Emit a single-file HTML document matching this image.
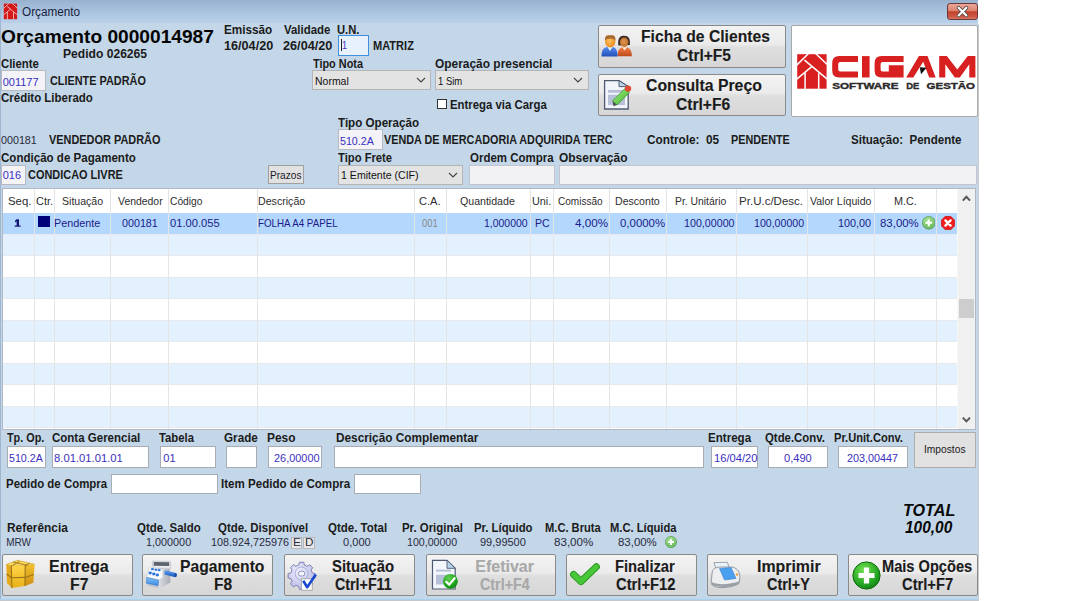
<!DOCTYPE html>
<html><head><meta charset="utf-8"><style>
html,body{margin:0;padding:0;width:1080px;height:601px;overflow:hidden;background:#fff}
body{position:relative;font-family:"Liberation Sans",sans-serif}
.t{position:absolute;line-height:0;white-space:nowrap;transform-origin:0 0}
</style></head><body>
<div style="position:absolute;left:0px;top:0px;width:978px;height:601px;background:#c3d7e8"></div>
<div style="position:absolute;left:0px;top:0px;width:978px;height:23px;background:linear-gradient(#97b1cf,#a6c0dc 40%,#b2cbe4 75%,#b9cfe9)"></div>
<div style="position:absolute;left:0px;top:0px;width:1px;height:601px;background:#9fb6d0"></div>
<div style="position:absolute;left:947px;top:3px;width:29px;height:15px;border:1px solid #6a3a3a;border-radius:3px;background:linear-gradient(#eaa898,#dc8270 45%,#c4422c 52%,#cc5a44 85%,#d87a66)">
<svg width="29" height="15" style="position:absolute;left:0;top:0"><path d="M10.6 3.8 L18.4 11.4 M18.4 3.8 L10.6 11.4" stroke="#5a4a4a" stroke-width="3.8" stroke-linecap="round"/><path d="M10.6 3.8 L18.4 11.4 M18.4 3.8 L10.6 11.4" stroke="#fff" stroke-width="2.1" stroke-linecap="round"/></svg></div>
<svg style="position:absolute;left:0;top:0" width="30" height="24">
<g transform="translate(3.8,3.6) scale(0.452,0.452)">
<rect x="0" y="0" width="29.4" height="34.5" fill="#d41818"/>
<g stroke="#f4c8c8" stroke-width="1.9" fill="none">
<path d="M11.1 -0.5 L-0.5 10.9"/>
<path d="M18.7 -0.5 L30 10.3"/>
<path d="M7.3 6 L30 25"/>
<path d="M-0.5 25 L14.6 12.4"/>
<path d="M7.9 18.8 V35"/>
<path d="M21.5 19 V35"/>
</g></g></svg>
<div style="position:absolute;left:1px;top:70px;width:43px;height:19px;background:#f4f4f8;border:1px solid #b9b9c0"></div>
<div style="position:absolute;left:1px;top:165px;width:23px;height:18px;background:#f4f4f8;border:1px solid #b9b9c0"></div>
<div style="position:absolute;left:268px;top:165px;width:34px;height:17px;background:#e1e1e1;border:1px solid #a0a0a0"></div>
<div style="position:absolute;left:338px;top:35px;width:29px;height:19px;background:#e6f1fc;border:1px solid #3f8fe0"></div>
<div style="position:absolute;left:341px;top:39px;width:1px;height:12px;background:#222"></div>
<div style="position:absolute;left:312px;top:70px;width:117px;height:18px;background:#e3e3e3;border:1px solid #b4b4b4"></div>
<div style="position:absolute;left:435px;top:70px;width:152px;height:18px;background:#e3e3e3;border:1px solid #b4b4b4"></div>
<svg style="position:absolute;left:416px;top:77px" width="10" height="6"><path d="M1 1 L5 5 L9 1" stroke="#444" stroke-width="1.1" fill="none"/></svg>
<svg style="position:absolute;left:573px;top:77px" width="10" height="6"><path d="M1 1 L5 5 L9 1" stroke="#444" stroke-width="1.1" fill="none"/></svg>
<div style="position:absolute;left:437px;top:99px;width:8px;height:8px;background:#fff;border:1px solid #333"></div>
<div style="position:absolute;left:338px;top:129px;width:43px;height:19px;background:#f4f4f8;border:1px solid #b9b9c0"></div>
<div style="position:absolute;left:338px;top:165px;width:123px;height:18px;background:#e3e3e3;border:1px solid #b4b4b4"></div>
<svg style="position:absolute;left:448px;top:172px" width="10" height="6"><path d="M1 1 L5 5 L9 1" stroke="#444" stroke-width="1.1" fill="none"/></svg>
<div style="position:absolute;left:469px;top:165px;width:84px;height:18px;background:#f2f2f4;border:1px solid #c4c4cc"></div>
<div style="position:absolute;left:559px;top:165px;width:416px;height:18px;background:#f2f2f4;border:1px solid #c4c4cc"></div>
<div style="position:absolute;left:598px;top:25px;width:188px;height:43px;box-sizing:border-box;border:1px solid #8a8a8a;border-radius:2px;background:linear-gradient(#f3f3f3,#ebebeb 44%,#dfdfdf 52%,#d6d6d6)"></div>
<div style="position:absolute;left:598px;top:74px;width:188px;height:42px;box-sizing:border-box;border:1px solid #8a8a8a;border-radius:2px;background:linear-gradient(#f3f3f3,#ebebeb 44%,#dfdfdf 52%,#d6d6d6)"></div>
<svg style="position:absolute;left:0;top:0" width="1080" height="601">
<defs>
<linearGradient id="ubl" x1="0" y1="0" x2="0" y2="1"><stop offset="0" stop-color="#5a8ef0"/><stop offset="1" stop-color="#2050b8"/></linearGradient>
<linearGradient id="uor" x1="0" y1="0" x2="0" y2="1"><stop offset="0" stop-color="#f08048"/><stop offset="1" stop-color="#c04818"/></linearGradient>
<radialGradient id="uh1" cx=".45" cy=".45" r=".6"><stop offset="0" stop-color="#ffc060"/><stop offset="1" stop-color="#e88a20"/></radialGradient>
<radialGradient id="uh2" cx=".45" cy=".45" r=".6"><stop offset="0" stop-color="#e09850"/><stop offset="1" stop-color="#b86a28"/></radialGradient>
<linearGradient id="pgr" x1="0" y1="0" x2="1" y2="1"><stop offset="0" stop-color="#a0f080"/><stop offset="1" stop-color="#40b030"/></linearGradient>
</defs>
<path d="M617.6 56.3 C617.3 50 620 47 624.6 47 C629.2 47 632 50 631.8 56.3 Z" fill="url(#uor)"/>
<path d="M622 47.2 L624.6 50.6 L627.2 47.2 Z" fill="#ffe4d0"/>
<path d="M618.3 45.4 C617.5 38 620 35.8 624.2 35.8 C628.5 35.8 630.5 38.5 629.8 45 Z" fill="#3a2a22"/>
<ellipse cx="624.2" cy="42.2" rx="4.2" ry="4.8" fill="url(#uh2)"/>
<path d="M601.5 56.5 C601.2 50 604 46.5 609.8 46.5 C615.6 46.5 617.8 50 617.5 56.5 Z" fill="url(#ubl)"/>
<path d="M607.2 46.7 L610 51 L612.8 46.7 Z" fill="#e0f0ff"/>
<ellipse cx="610.2" cy="41.4" rx="5.2" ry="6" fill="url(#uh1)"/>
<path d="M605 40.5 C604.6 35 607.5 35.3 610.2 35.3 C613 35.3 615.8 35 615.5 40.5 C613.5 37.8 607 37.8 605 40.5 Z" fill="#a86a30"/>
<path d="M604.6 80.6 H619 L628.2 86.6 V109 H604.6 Z" fill="#f2f6fc" stroke="#505a70" stroke-width="1.3"/>
<path d="M619 80.6 V86.6 H628.2 Z" fill="#b8d4ec" stroke="#505a70" stroke-width="1"/>
<rect x="608" y="89.9" width="17" height="2.9" fill="#b8c0d8"/>
<rect x="608" y="94.7" width="17" height="10.4" fill="#b8c0d8"/>
<path d="M612.5 101 L625 88.5 L629.5 92.5 L617 105 Z" fill="url(#pgr)" stroke="#3a9a30" stroke-width=".8"/>
<path d="M612.5 101 L617 105 L613.5 106.3 Z" fill="#505050"/>
<circle cx="628" cy="88.6" r="3.2" fill="#e04a30"/>
</svg>
<div style="position:absolute;left:791px;top:25px;width:187px;height:92px;box-sizing:border-box;background:#fff;border:1px solid #a8a8a8;border-radius:2px"></div>
<svg style="position:absolute;left:0;top:0" width="1080" height="601">
<g transform="translate(797.2,54.2)">
<rect x="0" y="0" width="29.4" height="34.5" fill="#d92020"/>
<g stroke="#fff" stroke-width="1.5" fill="none" stroke-linecap="butt">
<path d="M11.1 -0.5 L-0.5 10.9"/>
<path d="M18.7 -0.5 L30 10.3"/>
<path d="M7.3 6 L30 25"/>
<path d="M-0.5 25 L14.6 12.4"/>
<path d="M7.9 18.8 V35"/>
<path d="M21.5 19 V35"/>
</g></g>
<g fill="#d92020" fill-rule="evenodd">
<path d="M839.2 56.1 H858 V62.1 H840.2 Q838.2 62.1 838.2 64.1 V69.5 Q838.2 71.5 840.2 71.5 H858 V77.5 H839.2 Q832.2 77.5 832.2 70.5 V63.1 Q832.2 56.1 839.2 56.1 Z"/>
<path d="M862 56.1 H869.6 V77.5 H862 Z"/>
<path d="M881.6 56.1 H903.6 V62.1 H882.6 Q880.6 62.1 880.6 64.1 V69.5 Q880.6 71.5 882.6 71.5 H888.8 V65.3 H903.6 V77.5 H881.6 Q874.6 77.5 874.6 70.5 V63.1 Q874.6 56.1 881.6 56.1 Z"/>
<path d="M906.2 77.5 L918.9 56.1 H927.5 L935.7 77.5 H929.2 L923.2 61.8 L913.3 77.5 Z"/>
<path d="M939.2 77.5 V56.1 H946.8 L957.3 69.5 L967.8 56.1 H975.4 V77.5 H969.3 V64.3 L959.8 77.5 H954.8 L945.3 64.3 V77.5 Z"/>
</g>
<path d="M919.8 67.2 L926.6 67.8 L921 74.2 Z" fill="#111"/>
<g font-family="Liberation Sans" font-weight="bold" font-size="8.4" fill="#2a2a2a" stroke="#2a2a2a" stroke-width=".35">
<text transform="translate(832.2,88.8) scale(1.36,1)" x="0" y="0" textLength="48.8" lengthAdjust="spacingAndGlyphs">SOFTWARE</text>
<text transform="translate(906.2,88.8) scale(1.36,1)" x="0" y="0" textLength="9.6" lengthAdjust="spacingAndGlyphs">DE</text>
<text transform="translate(926.6,88.8) scale(1.36,1)" x="0" y="0" textLength="35.6" lengthAdjust="spacingAndGlyphs">GESTÃO</text>
</g>
</svg>
<div style="position:absolute;left:2px;top:188px;width:974px;height:242px;box-sizing:border-box;background:#fff;border:1px solid #b0b8c4"></div>
<div style="position:absolute;left:3px;top:213.0px;width:954.5px;height:21.5px;background:#b4d8fd"></div>
<div style="position:absolute;left:3px;top:233.5px;width:954.5px;height:1px;background:#e6e9ee"></div>
<div style="position:absolute;left:3px;top:234.5px;width:954.5px;height:21.5px;background:#e3f0fd"></div>
<div style="position:absolute;left:3px;top:255.0px;width:954.5px;height:1px;background:#e6e9ee"></div>
<div style="position:absolute;left:3px;top:256.0px;width:954.5px;height:21.5px;background:#ffffff"></div>
<div style="position:absolute;left:3px;top:276.5px;width:954.5px;height:1px;background:#e6e9ee"></div>
<div style="position:absolute;left:3px;top:277.5px;width:954.5px;height:21.5px;background:#e3f0fd"></div>
<div style="position:absolute;left:3px;top:298.0px;width:954.5px;height:1px;background:#e6e9ee"></div>
<div style="position:absolute;left:3px;top:299.0px;width:954.5px;height:21.5px;background:#ffffff"></div>
<div style="position:absolute;left:3px;top:319.5px;width:954.5px;height:1px;background:#e6e9ee"></div>
<div style="position:absolute;left:3px;top:320.5px;width:954.5px;height:21.5px;background:#e3f0fd"></div>
<div style="position:absolute;left:3px;top:341.0px;width:954.5px;height:1px;background:#e6e9ee"></div>
<div style="position:absolute;left:3px;top:342.0px;width:954.5px;height:21.5px;background:#ffffff"></div>
<div style="position:absolute;left:3px;top:362.5px;width:954.5px;height:1px;background:#e6e9ee"></div>
<div style="position:absolute;left:3px;top:363.5px;width:954.5px;height:21.5px;background:#e3f0fd"></div>
<div style="position:absolute;left:3px;top:384.0px;width:954.5px;height:1px;background:#e6e9ee"></div>
<div style="position:absolute;left:3px;top:385.0px;width:954.5px;height:21.5px;background:#ffffff"></div>
<div style="position:absolute;left:3px;top:405.5px;width:954.5px;height:1px;background:#e6e9ee"></div>
<div style="position:absolute;left:3px;top:406.5px;width:954.5px;height:21.5px;background:#e3f0fd"></div>
<div style="position:absolute;left:3px;top:427.0px;width:954.5px;height:1px;background:#e6e9ee"></div>
<div style="position:absolute;left:34px;top:189px;width:1px;height:240px;background:#e4e4e4"></div>
<div style="position:absolute;left:54px;top:189px;width:1px;height:240px;background:#e4e4e4"></div>
<div style="position:absolute;left:110px;top:189px;width:1px;height:240px;background:#e4e4e4"></div>
<div style="position:absolute;left:168px;top:189px;width:1px;height:240px;background:#e4e4e4"></div>
<div style="position:absolute;left:257px;top:189px;width:1px;height:240px;background:#e4e4e4"></div>
<div style="position:absolute;left:414px;top:189px;width:1px;height:240px;background:#e4e4e4"></div>
<div style="position:absolute;left:446px;top:189px;width:1px;height:240px;background:#e4e4e4"></div>
<div style="position:absolute;left:530px;top:189px;width:1px;height:240px;background:#e4e4e4"></div>
<div style="position:absolute;left:553px;top:189px;width:1px;height:240px;background:#e4e4e4"></div>
<div style="position:absolute;left:609px;top:189px;width:1px;height:240px;background:#e4e4e4"></div>
<div style="position:absolute;left:666px;top:189px;width:1px;height:240px;background:#e4e4e4"></div>
<div style="position:absolute;left:736px;top:189px;width:1px;height:240px;background:#e4e4e4"></div>
<div style="position:absolute;left:807px;top:189px;width:1px;height:240px;background:#e4e4e4"></div>
<div style="position:absolute;left:874px;top:189px;width:1px;height:240px;background:#e4e4e4"></div>
<div style="position:absolute;left:936px;top:189px;width:1px;height:240px;background:#e4e4e4"></div>
<div style="position:absolute;left:957px;top:189px;width:18px;height:240px;background:#f0f0f0;box-shadow:inset 1px 0 0 #f8f8f8"></div>
<div style="position:absolute;left:959px;top:299px;width:15px;height:19px;background:#cdcdcd"></div>
<svg style="position:absolute;left:961px;top:194px" width="11" height="9"><path d="M1.8 6.6 L5.4 2.8 L9 6.6" stroke="#555" stroke-width="2" fill="none"/></svg>
<svg style="position:absolute;left:961px;top:415px" width="11" height="9"><path d="M1.8 2.6 L5.4 6.4 L9 2.6" stroke="#555" stroke-width="2" fill="none"/></svg>
<svg style="position:absolute;left:0;top:0" width="30" height="240"><path d="M16.6 219.2 H19 V225.4 H20.6 V226.8 H14.7 V225.4 H16.6 V221.6 L15 222.4 V220.8 Z" fill="#16167a"/></svg>
<div style="position:absolute;left:38px;top:216px;width:12px;height:11px;background:#00007a"></div>
<svg style="position:absolute;left:921.7px;top:216.0px" width="13.6" height="13.6" viewBox="0 0 20 20">
<defs><radialGradient id="gp928.5" cx=".45" cy=".35" r=".7"><stop offset="0" stop-color="#b0e8a0"/><stop offset=".7" stop-color="#6cbc5c"/><stop offset="1" stop-color="#4a9a40"/></radialGradient></defs>
<circle cx="10" cy="10" r="9.4" fill="url(#gp928.5)" stroke="#4a9440" stroke-width=".9"/>
<circle cx="10" cy="10" r="7.6" fill="none" stroke="#c0ecb0" stroke-width=".8" opacity=".7"/>
<path d="M10 5v10M5 10h10" stroke="#fff" stroke-width="3"/></svg>
<svg style="position:absolute;left:941px;top:215.8px" width="14" height="14" viewBox="0 0 20 20">
<path d="M6 .5h8l5.5 5.5v8L14 19.5H6L.5 14V6z" fill="#ee1c1c" stroke="#c81010" stroke-width="1"/>
<path d="M6.3 6.3l7.4 7.4M13.7 6.3l-7.4 7.4" stroke="#fff" stroke-width="3.4" stroke-linecap="round"/></svg>
<div style="position:absolute;left:7px;top:446px;width:39px;height:22px;box-sizing:border-box;background:#fff;border:1px solid #a8acb4"></div>
<div style="position:absolute;left:52px;top:446px;width:97px;height:22px;box-sizing:border-box;background:#fff;border:1px solid #a8acb4"></div>
<div style="position:absolute;left:160px;top:446px;width:56px;height:22px;box-sizing:border-box;background:#fff;border:1px solid #a8acb4"></div>
<div style="position:absolute;left:226px;top:446px;width:31px;height:22px;box-sizing:border-box;background:#fff;border:1px solid #a8acb4"></div>
<div style="position:absolute;left:268px;top:446px;width:54px;height:22px;box-sizing:border-box;background:#fff;border:1px solid #a8acb4"></div>
<div style="position:absolute;left:334px;top:446px;width:370px;height:22px;box-sizing:border-box;background:#fff;border:1px solid #a8acb4"></div>
<div style="position:absolute;left:711px;top:446px;width:47px;height:22px;box-sizing:border-box;background:#fff;border:1px solid #a8acb4"></div>
<div style="position:absolute;left:768px;top:446px;width:60px;height:22px;box-sizing:border-box;background:#fff;border:1px solid #a8acb4"></div>
<div style="position:absolute;left:838px;top:446px;width:70px;height:22px;box-sizing:border-box;background:#fff;border:1px solid #a8acb4"></div>
<div style="position:absolute;left:914px;top:432px;width:62px;height:36px;box-sizing:border-box;background:#e1e1e1;border:1px solid #adadad"></div>
<div style="position:absolute;left:111px;top:474px;width:107px;height:20px;box-sizing:border-box;background:#fff;border:1px solid #a8acb4"></div>
<div style="position:absolute;left:354px;top:474px;width:67px;height:20px;box-sizing:border-box;background:#fff;border:1px solid #a8acb4"></div>
<div style="position:absolute;left:291px;top:537px;width:11px;height:12px;box-sizing:border-box;background:#e8e8e8;border:1px solid #b8b8b8"></div>
<div style="position:absolute;left:303px;top:537px;width:12px;height:12px;box-sizing:border-box;background:#e8e8e8;border:1px solid #b8b8b8"></div>
<svg style="position:absolute;left:665px;top:536px" width="12" height="12" viewBox="0 0 20 20">
<defs><radialGradient id="gp671" cx=".45" cy=".35" r=".7"><stop offset="0" stop-color="#b0e8a0"/><stop offset=".7" stop-color="#6cbc5c"/><stop offset="1" stop-color="#4a9a40"/></radialGradient></defs>
<circle cx="10" cy="10" r="9.4" fill="url(#gp671)" stroke="#4a9440" stroke-width=".9"/>
<circle cx="10" cy="10" r="7.6" fill="none" stroke="#c0ecb0" stroke-width=".8" opacity=".7"/>
<path d="M10 5v10M5 10h10" stroke="#fff" stroke-width="3"/></svg>
<div style="position:absolute;left:2px;top:554px;width:131px;height:42px;box-sizing:border-box;border:1px solid #8a8a8a;border-radius:2px;background:linear-gradient(#f3f3f3,#ebebeb 44%,#dfdfdf 52%,#d6d6d6)"></div>
<div style="position:absolute;left:142px;top:554px;width:131px;height:42px;box-sizing:border-box;border:1px solid #8a8a8a;border-radius:2px;background:linear-gradient(#f3f3f3,#ebebeb 44%,#dfdfdf 52%,#d6d6d6)"></div>
<div style="position:absolute;left:284px;top:554px;width:131px;height:42px;box-sizing:border-box;border:1px solid #8a8a8a;border-radius:2px;background:linear-gradient(#f3f3f3,#ebebeb 44%,#dfdfdf 52%,#d6d6d6)"></div>
<div style="position:absolute;left:426px;top:554px;width:130px;height:42px;box-sizing:border-box;border:1px solid #8a8a8a;border-radius:2px;background:linear-gradient(#f3f3f3,#ebebeb 44%,#dfdfdf 52%,#d6d6d6)"></div>
<div style="position:absolute;left:566px;top:554px;width:131px;height:42px;box-sizing:border-box;border:1px solid #8a8a8a;border-radius:2px;background:linear-gradient(#f3f3f3,#ebebeb 44%,#dfdfdf 52%,#d6d6d6)"></div>
<div style="position:absolute;left:707px;top:554px;width:131px;height:42px;box-sizing:border-box;border:1px solid #8a8a8a;border-radius:2px;background:linear-gradient(#f3f3f3,#ebebeb 44%,#dfdfdf 52%,#d6d6d6)"></div>
<div style="position:absolute;left:848px;top:554px;width:130px;height:42px;box-sizing:border-box;border:1px solid #8a8a8a;border-radius:2px;background:linear-gradient(#f3f3f3,#ebebeb 44%,#dfdfdf 52%,#d6d6d6)"></div>
<div style="position:absolute;left:0px;top:598.6px;width:978px;height:1.5px;background:#a6d4ef"></div>
<div style="position:absolute;left:0px;top:600px;width:978px;height:1px;background:#c4c8cc"></div>
<div style="position:absolute;left:978px;top:24px;width:1px;height:577px;background:#c8ccd0"></div>
<svg style="position:absolute;left:0;top:0" width="1080" height="601">
<defs>
<radialGradient id="gmo" cx=".4" cy=".3" r=".8"><stop offset="0" stop-color="#70e050"/><stop offset=".7" stop-color="#20a020"/><stop offset="1" stop-color="#107010"/></radialGradient>
<radialGradient id="gdc" cx=".4" cy=".3" r=".8"><stop offset="0" stop-color="#60d050"/><stop offset=".7" stop-color="#18a018"/><stop offset="1" stop-color="#0a7010"/></radialGradient>
</defs>
<!-- cube -->
<defs>
<linearGradient id="cbf" x1="0" y1="0" x2="0" y2="1"><stop offset="0" stop-color="#ffd448"/><stop offset="1" stop-color="#eab018"/></linearGradient>
<linearGradient id="cbr" x1="0" y1="0" x2="0" y2="1"><stop offset="0" stop-color="#f0c030"/><stop offset="1" stop-color="#d09010"/></linearGradient>
</defs>
<path d="M6.3 564.5 L17.5 560.3 L34.6 564.3 L25.2 565.6 L11.3 566 Z" fill="#ffdc60" stroke="#c89a20" stroke-width=".6"/>
<path d="M6.3 564.5 L11.3 566 L11.9 588 L7 583 Z" fill="#e4aa1c"/>
<path d="M11.3 566 L25.2 565.6 L25 586 L11.9 588 Z" fill="url(#cbf)"/>
<path d="M25.2 565.6 L34.6 564.3 L33.4 582.8 L25 586 Z" fill="url(#cbr)"/>
<g stroke="#9a7418" stroke-width="1.1" fill="none" stroke-linejoin="round">
<path d="M6.5 574 L11.5 577.8 L25.1 577.4 L33.9 574.4"/>
<path d="M11.3 566 L11.9 588"/>
<path d="M25.2 565.6 L25 586"/>
<path d="M11.3 566 L19.5 561.6 M25.2 565.6 L29.5 563.2 M13 562 L27.5 565.4" opacity=".8"/>
</g>
<!-- register -->
<defs>
<linearGradient id="rgside" x1="0" y1="0" x2="1" y2="0"><stop offset="0" stop-color="#dcdfe4"/><stop offset="1" stop-color="#a8acb4"/></linearGradient>
<linearGradient id="rgdrw" x1="0" y1="0" x2="0" y2="1"><stop offset="0" stop-color="#80c0f8"/><stop offset="1" stop-color="#3a88e0"/></linearGradient>
<linearGradient id="rghdl" x1="0" y1="0" x2="0" y2="1"><stop offset="0" stop-color="#5aa0f0"/><stop offset="1" stop-color="#1a58c0"/></linearGradient>
</defs>
<path d="M162.9 569.6 L169.8 568.7 L170.5 582.6 L159.1 588.6 L158.5 580 Z" fill="url(#rgside)"/>
<path d="M146.4 583.2 L158.3 585.8 L159.1 588.6 L147.5 586 Z" fill="#c4c8ce"/>
<path d="M152.4 561.1 L169.8 561.4 L170.8 563.3 L170.5 568.7 L153.4 568.3 L152.1 563 Z" fill="#e6e8ec" stroke="#b0b4bc" stroke-width=".6"/>
<path d="M153.7 562 L169.2 562.3 L169.2 566.1 L153.7 565.8 Z" fill="#5e626c"/>
<path d="M149 567.7 L162.9 569.6 L162.9 577.8 L158.5 580 L146.7 577.3 Z" fill="#f8f9fb" stroke="#c0c4cc" stroke-width=".5"/>
<g fill="#2a74dc">
<ellipse cx="152.4" cy="569.2" rx="1.5" ry="1.1"/><ellipse cx="155.9" cy="569.8" rx="1.5" ry="1.1"/><ellipse cx="159.1" cy="570.2" rx="1.5" ry="1.1"/>
<ellipse cx="150.2" cy="573" rx="1.7" ry="1.4"/><ellipse cx="153.8" cy="574" rx="1.7" ry="1.4"/><ellipse cx="157.3" cy="575" rx="1.7" ry="1.4"/>
</g>
<path d="M146.7 577.5 L158.5 580 L158.1 585.7 L146.4 583.2 Z" fill="url(#rgdrw)" stroke="#2a70c8" stroke-width=".5"/>
<path d="M164.8 570.2 L175.8 573 L175.4 577.2 L164.4 574.4 Z" fill="url(#rghdl)"/>
<ellipse cx="175.6" cy="575.1" rx="1.4" ry="2.1" fill="#1a50a8"/>
<!-- gear -->
<defs><radialGradient id="ggr" cx=".4" cy=".35" r=".7"><stop offset="0" stop-color="#f0f0fc"/><stop offset="1" stop-color="#b4b6e4"/></radialGradient></defs>
<g transform="translate(301.6,573.6) scale(0.87) translate(-301.5,-573.5)"><path d="M299 560.5 h5 l.8 3.2 3.2 1.4 2.8-1.9 3.5 3.5-1.9 2.8 1.4 3.2 3.2.8 v5 l-3.2.8-1.4 3.2 1.9 2.8-3.5 3.5-2.8-1.9-3.2 1.4-.8 3.2 h-5 l-.8-3.2-3.2-1.4-2.8 1.9-3.5-3.5 1.9-2.8-1.4-3.2-3.2-.8 v-5 l3.2-.8 1.4-3.2-1.9-2.8 3.5-3.5 2.8 1.9 3.2-1.4 z" fill="url(#ggr)" stroke="#7c7eb4" stroke-width="1.1" stroke-linejoin="round"/>
<circle cx="301.5" cy="573.5" r="7.5" fill="none" stroke="#a4a6d4" stroke-width="1"/>
<ellipse cx="301.5" cy="573.5" rx="3.8" ry="3" fill="#f4f4f8" stroke="#8a8cc0" stroke-width="1.1"/>
</g>
<rect x="301.4" y="578.8" width="10.8" height="11.4" fill="#fff" stroke="#9a9a9a" stroke-width=".8"/>
<path d="M303.2 580.8 L307.2 587.2 L315.8 574.4" stroke="#1848d0" stroke-width="2.6" fill="none" stroke-linejoin="round"/>
<!-- doc check -->
<path d="M432.5 560.3 H447 L455.2 568.3 V589 H432.5 Z" fill="#f2f6fc" stroke="#505a70" stroke-width="1.2"/>
<path d="M447 560.3 V568.3 H455.2 Z" fill="#b8d4ec" stroke="#505a70" stroke-width=".9"/>
<rect x="436" y="569.6" width="15" height="2" fill="#b8c0d8"/>
<rect x="436" y="574.7" width="12" height="9.8" fill="#b8c0d8"/>
<circle cx="450.4" cy="581.3" r="7.4" fill="url(#gdc)"/>
<path d="M446.2 581.8 L449.2 584.6 L454.6 578.2" stroke="#fff" stroke-width="2.2" fill="none" stroke-linecap="round"/>
<!-- check -->
<path d="M573.6 574.4 L580.9 581.6 L596.4 566.8" stroke="#2a9a20" stroke-width="7" fill="none" stroke-linecap="round" stroke-linejoin="round"/>
<path d="M573.6 574.4 L580.9 581.6 L596.4 566.8" stroke="#48c838" stroke-width="5" fill="none" stroke-linecap="round" stroke-linejoin="round"/>
<!-- printer -->
<path d="M714 562.6 L727.5 562.3 L729.5 569.5 L716.5 570.5 Z" fill="#e8f2fa" stroke="#8a9098" stroke-width=".8"/>
<path d="M712 574 C712 568 716 567 722 567 L731 567 C736 567.5 739.8 570.5 739.8 576.5 L739.5 582 C737 586 728 587.8 720 587.5 C714 587.2 711.2 585.5 711.2 582 Z" fill="#eceef0" stroke="#8a9098" stroke-width=".9"/>
<path d="M719.5 568.5 L731 567.5 L736 578.5 L724.5 580 Z" fill="#4aa0f0" stroke="#3a80c8" stroke-width=".6"/>
<path d="M712 582 C716 585 730 585 739.5 581 L739 584 C734 587.5 718 588 712 585 Z" fill="#9aa0a8"/>
<circle cx="737" cy="574.5" r="1.2" fill="#f0a030"/>
<!-- plus -->
<circle cx="866.5" cy="575.5" r="13.6" fill="url(#gmo)" stroke="#0a6a0a" stroke-width="1"/>
<path d="M866.5 567.5v16M858.5 575.5h16" stroke="#fff" stroke-width="5.2"/>
</svg>
<div class="t" style="left:22.33px;top:12.00px;font-size:12.50px;font-weight:normal;font-style:normal;color:#18233e;transform:scaleX(0.9396);">Orçamento</div>
<div class="t" style="left:0.73px;top:37.00px;font-size:18.60px;font-weight:bold;font-style:normal;color:#050505;transform:scaleX(1.0297);">Orçamento 0000014987</div>
<div class="t" style="left:63.27px;top:54.00px;font-size:12.00px;font-weight:bold;font-style:normal;color:#1b1b1b;transform:scaleX(1.0080);">Pedido 026265</div>
<div class="t" style="left:0.55px;top:64.00px;font-size:12.00px;font-weight:bold;font-style:normal;color:#1b1b1b;transform:scaleX(0.9435);">Cliente</div>
<div class="t" style="left:2.67px;top:82.00px;font-size:11.00px;font-weight:normal;font-style:normal;color:#3a2fc0;">001177</div>
<div class="t" style="left:49.57px;top:81.00px;font-size:12.00px;font-weight:bold;font-style:normal;color:#1b1b1b;transform:scaleX(0.9061);">CLIENTE PADRÃO</div>
<div class="t" style="left:0.54px;top:98.00px;font-size:12.00px;font-weight:bold;font-style:normal;color:#1b1b1b;transform:scaleX(0.9563);">Crédito Liberado</div>
<div class="t" style="left:0.68px;top:140.00px;font-size:10.60px;font-weight:normal;font-style:normal;color:#2a2a3a;transform:scaleX(1.0126);">000181</div>
<div class="t" style="left:49.00px;top:140.00px;font-size:12.00px;font-weight:bold;font-style:normal;color:#1b1b1b;transform:scaleX(0.9098);">VENDEDOR PADRÃO</div>
<div class="t" style="left:0.54px;top:158.00px;font-size:12.00px;font-weight:bold;font-style:normal;color:#1b1b1b;transform:scaleX(0.9628);">Condição de Pagamento</div>
<div class="t" style="left:2.67px;top:175.00px;font-size:11.00px;font-weight:normal;font-style:normal;color:#3a2fc0;">016</div>
<div class="t" style="left:27.56px;top:175.00px;font-size:12.00px;font-weight:bold;font-style:normal;color:#1b1b1b;transform:scaleX(0.9119);">CONDICAO LIVRE</div>
<div class="t" style="left:269.79px;top:175.00px;font-size:10.60px;font-weight:normal;font-style:normal;color:#1a1a2a;transform:scaleX(0.9552);">Prazos</div>
<div class="t" style="left:223.70px;top:30.00px;font-size:12.00px;font-weight:bold;font-style:normal;color:#1b1b1b;transform:scaleX(0.9778);">Emissão</div>
<div class="t" style="left:223.64px;top:46.00px;font-size:13.10px;font-weight:bold;font-style:normal;color:#1b1b1b;transform:scaleX(0.9652);">16/04/20</div>
<div class="t" style="left:284.00px;top:30.00px;font-size:12.00px;font-weight:bold;font-style:normal;color:#1b1b1b;transform:scaleX(0.9509);">Validade</div>
<div class="t" style="left:282.62px;top:46.00px;font-size:13.10px;font-weight:bold;font-style:normal;color:#1b1b1b;transform:scaleX(0.9696);">26/04/20</div>
<div class="t" style="left:337.33px;top:30.00px;font-size:12.00px;font-weight:bold;font-style:normal;color:#1b1b1b;transform:scaleX(0.9347);">U.N.</div>
<div class="t" style="left:342.36px;top:45.00px;font-size:11.00px;font-weight:normal;font-style:normal;color:#3a2fc0;transform:scaleX(0.8264);">1</div>
<div class="t" style="left:373.34px;top:46.00px;font-size:12.00px;font-weight:bold;font-style:normal;color:#1b1b1b;transform:scaleX(0.9204);">MATRIZ</div>
<div class="t" style="left:313.29px;top:64.00px;font-size:12.00px;font-weight:bold;font-style:normal;color:#1b1b1b;transform:scaleX(0.9066);">Tipo Nota</div>
<div class="t" style="left:314.86px;top:82.00px;font-size:10.20px;font-weight:normal;font-style:normal;color:#111;transform:scaleX(1.0280);">Normal</div>
<div class="t" style="left:434.82px;top:64.00px;font-size:12.00px;font-weight:bold;font-style:normal;color:#1b1b1b;transform:scaleX(0.9943);">Operação presencial</div>
<div class="t" style="left:438.44px;top:82.00px;font-size:10.20px;font-weight:normal;font-style:normal;color:#111;transform:scaleX(0.9306);">1 Sim</div>
<div class="t" style="left:450.12px;top:105.00px;font-size:12.00px;font-weight:bold;font-style:normal;color:#1b1b1b;transform:scaleX(0.9479);">Entrega via Carga</div>
<div class="t" style="left:337.88px;top:123.00px;font-size:12.00px;font-weight:bold;font-style:normal;color:#1b1b1b;transform:scaleX(0.9675);">Tipo Operação</div>
<div class="t" style="left:340.37px;top:141.00px;font-size:11.00px;font-weight:normal;font-style:normal;color:#3a2fc0;transform:scaleX(0.9693);">510.2A</div>
<div class="t" style="left:384.40px;top:140.00px;font-size:12.00px;font-weight:bold;font-style:normal;color:#1b1b1b;transform:scaleX(0.9017);">VENDA DE MERCADORIA ADQUIRIDA TERC</div>
<div class="t" style="left:646.53px;top:140.00px;font-size:12.00px;font-weight:bold;font-style:normal;color:#1b1b1b;transform:scaleX(0.9842);">Controle:&nbsp; 05</div>
<div class="t" style="left:731.15px;top:140.00px;font-size:12.00px;font-weight:bold;font-style:normal;color:#1b1b1b;transform:scaleX(0.8990);">PENDENTE</div>
<div class="t" style="left:850.77px;top:140.00px;font-size:12.00px;font-weight:bold;font-style:normal;color:#1b1b1b;transform:scaleX(0.9637);">Situação:&nbsp; Pendente</div>
<div class="t" style="left:337.89px;top:158.00px;font-size:12.00px;font-weight:bold;font-style:normal;color:#1b1b1b;transform:scaleX(0.9363);">Tipo Frete</div>
<div class="t" style="left:341.46px;top:176.00px;font-size:10.20px;font-weight:normal;font-style:normal;color:#111;transform:scaleX(1.0386);">1 Emitente (CIF)</div>
<div class="t" style="left:469.54px;top:158.00px;font-size:12.00px;font-weight:bold;font-style:normal;color:#1b1b1b;transform:scaleX(0.9571);">Ordem Compra</div>
<div class="t" style="left:558.92px;top:158.00px;font-size:12.00px;font-weight:bold;font-style:normal;color:#1b1b1b;transform:scaleX(0.9962);">Observação</div>
<div class="t" style="left:641.06px;top:37.00px;font-size:16.00px;font-weight:bold;font-style:normal;color:#1b1b1b;transform:scaleX(0.9796);-webkit-text-stroke:.12px">Ficha de Clientes</div>
<div class="t" style="left:676.78px;top:56.00px;font-size:16.00px;font-weight:bold;font-style:normal;color:#1b1b1b;transform:scaleX(0.9704);-webkit-text-stroke:.12px">Ctrl+F5</div>
<div class="t" style="left:645.57px;top:86.00px;font-size:16.00px;font-weight:bold;font-style:normal;color:#1b1b1b;transform:scaleX(0.9869);-webkit-text-stroke:.12px">Consulta Preço</div>
<div class="t" style="left:676.18px;top:105.00px;font-size:16.00px;font-weight:bold;font-style:normal;color:#1b1b1b;transform:scaleX(0.9733);-webkit-text-stroke:.12px">Ctrl+F6</div>
<div class="t" style="left:7.54px;top:201.00px;font-size:11.50px;font-weight:normal;font-style:normal;color:#2e2e2e;transform:scaleX(0.9916);">Seq.</div>
<div class="t" style="left:35.95px;top:201.00px;font-size:11.50px;font-weight:normal;font-style:normal;color:#2e2e2e;transform:scaleX(0.9506);">Ctr.</div>
<div class="t" style="left:62.08px;top:201.00px;font-size:11.50px;font-weight:normal;font-style:normal;color:#2e2e2e;transform:scaleX(0.9173);">Situação</div>
<div class="t" style="left:117.50px;top:201.00px;font-size:11.50px;font-weight:normal;font-style:normal;color:#2e2e2e;transform:scaleX(0.9065);">Vendedor</div>
<div class="t" style="left:170.49px;top:201.00px;font-size:11.50px;font-weight:normal;font-style:normal;color:#2e2e2e;transform:scaleX(0.8885);">Código</div>
<div class="t" style="left:258.15px;top:201.00px;font-size:11.50px;font-weight:normal;font-style:normal;color:#2e2e2e;transform:scaleX(0.9239);">Descrição</div>
<div class="t" style="left:419.45px;top:201.00px;font-size:11.50px;font-weight:normal;font-style:normal;color:#2e2e2e;transform:scaleX(0.9624);">C.A.</div>
<div class="t" style="left:459.58px;top:201.00px;font-size:11.50px;font-weight:normal;font-style:normal;color:#2e2e2e;transform:scaleX(0.9217);">Quantidade</div>
<div class="t" style="left:532.24px;top:201.00px;font-size:11.50px;font-weight:normal;font-style:normal;color:#2e2e2e;transform:scaleX(0.9391);">Uni.</div>
<div class="t" style="left:558.25px;top:201.00px;font-size:11.50px;font-weight:normal;font-style:normal;color:#2e2e2e;transform:scaleX(0.8726);">Comissão</div>
<div class="t" style="left:614.65px;top:201.00px;font-size:11.50px;font-weight:normal;font-style:normal;color:#2e2e2e;transform:scaleX(0.9207);">Desconto</div>
<div class="t" style="left:675.17px;top:201.00px;font-size:11.50px;font-weight:normal;font-style:normal;color:#2e2e2e;transform:scaleX(0.9001);">Pr. Unitário</div>
<div class="t" style="left:739.08px;top:201.00px;font-size:11.50px;font-weight:normal;font-style:normal;color:#2e2e2e;">Pr.U.c/Desc.</div>
<div class="t" style="left:810.00px;top:201.00px;font-size:11.50px;font-weight:normal;font-style:normal;color:#2e2e2e;transform:scaleX(0.9173);">Valor Líquido</div>
<div class="t" style="left:894.14px;top:201.00px;font-size:11.50px;font-weight:normal;font-style:normal;color:#2e2e2e;transform:scaleX(0.9398);">M.C.</div>
<div class="t" style="left:54.14px;top:224.00px;font-size:10.20px;font-weight:normal;font-style:normal;color:#1a1a88;transform:scaleX(1.0591);">Pendente</div>
<div class="t" style="left:121.68px;top:224.00px;font-size:10.20px;font-weight:normal;font-style:normal;color:#1a1a88;transform:scaleX(1.0523);">000181</div>
<div class="t" style="left:169.66px;top:224.00px;font-size:10.20px;font-weight:normal;font-style:normal;color:#1a1a88;transform:scaleX(1.0961);">01.00.055</div>
<div class="t" style="left:258.22px;top:224.00px;font-size:10.20px;font-weight:normal;font-style:normal;color:#1a1a88;transform:scaleX(0.9586);">FOLHA A4 PAPEL</div>
<div class="t" style="left:421.72px;top:224.00px;font-size:10.20px;font-weight:normal;font-style:normal;color:#888;transform:scaleX(0.9236);">001</div>
<div class="t" style="left:484.27px;top:224.00px;font-size:10.20px;font-weight:normal;font-style:normal;color:#1a1a88;transform:scaleX(1.0251);">1,000000</div>
<div class="t" style="left:534.65px;top:224.00px;font-size:10.20px;font-weight:normal;font-style:normal;color:#1a1a88;transform:scaleX(1.0364);">PC</div>
<div class="t" style="left:574.77px;top:224.00px;font-size:10.20px;font-weight:normal;font-style:normal;color:#1a1a88;transform:scaleX(1.1436);">4,00%</div>
<div class="t" style="left:619.66px;top:224.00px;font-size:10.20px;font-weight:normal;font-style:normal;color:#1a1a88;transform:scaleX(1.1219);">0,0000%</div>
<div class="t" style="left:684.25px;top:224.00px;font-size:10.20px;font-weight:normal;font-style:normal;color:#1a1a88;transform:scaleX(1.0502);">100,00000</div>
<div class="t" style="left:754.26px;top:224.00px;font-size:10.20px;font-weight:normal;font-style:normal;color:#1a1a88;transform:scaleX(1.0396);">100,00000</div>
<div class="t" style="left:838.24px;top:224.00px;font-size:10.20px;font-weight:normal;font-style:normal;color:#1a1a88;transform:scaleX(1.0626);">100,00</div>
<div class="t" style="left:879.54px;top:224.00px;font-size:10.20px;font-weight:normal;font-style:normal;color:#1a1a88;transform:scaleX(1.1213);">83,00%</div>
<div class="t" style="left:7.49px;top:438.00px;font-size:12.00px;font-weight:bold;font-style:normal;color:#1b1b1b;transform:scaleX(0.9012);">Tp. Op.</div>
<div class="t" style="left:51.54px;top:438.00px;font-size:12.00px;font-weight:bold;font-style:normal;color:#1b1b1b;transform:scaleX(0.9589);">Conta Gerencial</div>
<div class="t" style="left:158.89px;top:438.00px;font-size:12.00px;font-weight:bold;font-style:normal;color:#1b1b1b;transform:scaleX(0.9416);">Tabela</div>
<div class="t" style="left:223.53px;top:438.00px;font-size:12.00px;font-weight:bold;font-style:normal;color:#1b1b1b;transform:scaleX(0.9738);">Grade</div>
<div class="t" style="left:266.88px;top:438.00px;font-size:12.00px;font-weight:bold;font-style:normal;color:#1b1b1b;transform:scaleX(0.9931);">Peso</div>
<div class="t" style="left:336.29px;top:438.00px;font-size:12.00px;font-weight:bold;font-style:normal;color:#1b1b1b;transform:scaleX(0.9841);">Descrição Complementar</div>
<div class="t" style="left:707.70px;top:438.00px;font-size:12.00px;font-weight:bold;font-style:normal;color:#1b1b1b;transform:scaleX(0.9655);">Entrega</div>
<div class="t" style="left:764.54px;top:438.00px;font-size:12.00px;font-weight:bold;font-style:normal;color:#1b1b1b;transform:scaleX(0.9480);">Qtde.Conv.</div>
<div class="t" style="left:834.33px;top:438.00px;font-size:12.00px;font-weight:bold;font-style:normal;color:#1b1b1b;transform:scaleX(0.9257);">Pr.Unit.Conv.</div>
<div class="t" style="left:9.17px;top:458.00px;font-size:11.00px;font-weight:normal;font-style:normal;color:#3a2fc0;transform:scaleX(0.9693);">510.2A</div>
<div class="t" style="left:54.15px;top:458.00px;font-size:11.00px;font-weight:normal;font-style:normal;color:#3a2fc0;transform:scaleX(1.0221);">8.01.01.01.01</div>
<div class="t" style="left:163.27px;top:458.00px;font-size:11.00px;font-weight:normal;font-style:normal;color:#3a2fc0;">01</div>
<div class="t" style="left:274.45px;top:458.00px;font-size:11.00px;font-weight:normal;font-style:normal;color:#3a2fc0;transform:scaleX(0.9926);">26,00000</div>
<div class="t" style="left:713.62px;top:458.00px;font-size:11.00px;font-weight:normal;font-style:normal;color:#3a2fc0;transform:scaleX(1.0132);">16/04/20</div>
<div class="t" style="left:783.67px;top:458.00px;font-size:11.00px;font-weight:normal;font-style:normal;color:#3a2fc0;transform:scaleX(1.0075);">0,490</div>
<div class="t" style="left:847.06px;top:458.00px;font-size:11.00px;font-weight:normal;font-style:normal;color:#3a2fc0;transform:scaleX(0.9796);">203,00447</div>
<div class="t" style="left:924.08px;top:449.00px;font-size:10.60px;font-weight:normal;font-style:normal;color:#1a1a1a;transform:scaleX(0.9656);">Impostos</div>
<div class="t" style="left:6.31px;top:484.00px;font-size:12.00px;font-weight:bold;font-style:normal;color:#1b1b1b;transform:scaleX(0.9539);">Pedido de Compra</div>
<div class="t" style="left:221.31px;top:484.00px;font-size:12.00px;font-weight:bold;font-style:normal;color:#1b1b1b;transform:scaleX(0.9635);">Item Pedido de Compra</div>
<div class="t" style="left:6.88px;top:528.00px;font-size:12.20px;font-weight:bold;font-style:normal;color:#1b1b1b;transform:scaleX(0.9770);">Referência</div>
<div class="t" style="left:136.54px;top:528.00px;font-size:12.20px;font-weight:bold;font-style:normal;color:#1b1b1b;transform:scaleX(0.9414);">Qtde. Saldo</div>
<div class="t" style="left:217.54px;top:528.00px;font-size:12.20px;font-weight:bold;font-style:normal;color:#1b1b1b;transform:scaleX(0.9374);">Qtde. Disponível</div>
<div class="t" style="left:327.54px;top:528.00px;font-size:12.20px;font-weight:bold;font-style:normal;color:#1b1b1b;transform:scaleX(0.9433);">Qtde. Total</div>
<div class="t" style="left:402.31px;top:528.00px;font-size:12.20px;font-weight:bold;font-style:normal;color:#1b1b1b;transform:scaleX(0.9366);">Pr. Original</div>
<div class="t" style="left:474.32px;top:528.00px;font-size:12.20px;font-weight:bold;font-style:normal;color:#1b1b1b;transform:scaleX(0.9286);">Pr. Líquido</div>
<div class="t" style="left:545.08px;top:528.00px;font-size:12.20px;font-weight:bold;font-style:normal;color:#1b1b1b;transform:scaleX(0.9142);">M.C. Bruta</div>
<div class="t" style="left:610.33px;top:528.00px;font-size:12.20px;font-weight:bold;font-style:normal;color:#1b1b1b;transform:scaleX(0.9173);">M.C. Líquida</div>
<div class="t" style="left:6.20px;top:543.00px;font-size:10.00px;font-weight:normal;font-style:normal;color:#2a2a40;">MRW</div>
<div class="t" style="left:146.24px;top:543.00px;font-size:10.00px;font-weight:normal;font-style:normal;color:#2a2a40;transform:scaleX(1.0825);">1,000000</div>
<div class="t" style="left:211.25px;top:543.00px;font-size:10.00px;font-weight:normal;font-style:normal;color:#2a2a40;transform:scaleX(1.0774);">108.924,725976</div>
<div class="t" style="left:292.55px;top:543.00px;font-size:10.00px;font-weight:normal;font-style:normal;color:#2a2a40;transform:scaleX(1.1818);">E</div>
<div class="t" style="left:304.57px;top:543.00px;font-size:10.00px;font-weight:normal;font-style:normal;color:#2a2a40;transform:scaleX(1.1667);">D</div>
<div class="t" style="left:342.67px;top:543.00px;font-size:10.00px;font-weight:normal;font-style:normal;color:#2a2a40;transform:scaleX(1.1082);">0,000</div>
<div class="t" style="left:407.26px;top:543.00px;font-size:10.00px;font-weight:normal;font-style:normal;color:#2a2a40;transform:scaleX(1.0604);">100,00000</div>
<div class="t" style="left:479.56px;top:543.00px;font-size:10.00px;font-weight:normal;font-style:normal;color:#2a2a40;transform:scaleX(1.0990);">99,99500</div>
<div class="t" style="left:554.04px;top:543.00px;font-size:10.00px;font-weight:normal;font-style:normal;color:#2a2a40;transform:scaleX(1.1588);">83,00%</div>
<div class="t" style="left:617.54px;top:543.00px;font-size:10.00px;font-weight:normal;font-style:normal;color:#2a2a40;transform:scaleX(1.1437);">83,00%</div>
<div class="t" style="left:902.57px;top:511.00px;font-size:16.00px;font-weight:bold;font-style:italic;color:#080808;transform:scaleX(1.0078);">TOTAL</div>
<div class="t" style="left:904.85px;top:528.00px;font-size:16.00px;font-weight:bold;font-style:italic;color:#080808;transform:scaleX(0.9655);">100,00</div>
<div class="t" style="left:49.04px;top:567.00px;font-size:16.00px;font-weight:bold;font-style:normal;color:#1b1b1b;-webkit-text-stroke:.12px">Entrega</div>
<div class="t" style="left:69.55px;top:585.00px;font-size:16.00px;font-weight:bold;font-style:normal;color:#1b1b1b;transform:scaleX(0.9922);-webkit-text-stroke:.12px">F7</div>
<div class="t" style="left:180.31px;top:567.00px;font-size:16.00px;font-weight:bold;font-style:normal;color:#1b1b1b;transform:scaleX(0.9789);-webkit-text-stroke:.12px">Pagamento</div>
<div class="t" style="left:213.57px;top:585.00px;font-size:16.00px;font-weight:bold;font-style:normal;color:#1b1b1b;transform:scaleX(0.9686);-webkit-text-stroke:.12px">F8</div>
<div class="t" style="left:332.20px;top:567.00px;font-size:16.00px;font-weight:bold;font-style:normal;color:#1b1b1b;transform:scaleX(0.9298);-webkit-text-stroke:.12px">Situação</div>
<div class="t" style="left:334.93px;top:585.00px;font-size:16.00px;font-weight:bold;font-style:normal;color:#1b1b1b;transform:scaleX(0.8916);-webkit-text-stroke:.12px">Ctrl+F11</div>
<div class="t" style="left:475.29px;top:567.00px;font-size:16.00px;font-weight:bold;font-style:normal;color:#a8a8a8;-webkit-text-stroke:.12px">Efetivar</div>
<div class="t" style="left:480.18px;top:585.00px;font-size:16.00px;font-weight:bold;font-style:normal;color:#a8a8a8;transform:scaleX(0.8956);-webkit-text-stroke:.12px">Ctrl+F4</div>
<div class="t" style="left:614.87px;top:567.00px;font-size:16.00px;font-weight:bold;font-style:normal;color:#1b1b1b;transform:scaleX(0.9209);-webkit-text-stroke:.12px">Finalizar</div>
<div class="t" style="left:615.66px;top:585.00px;font-size:16.00px;font-weight:bold;font-style:normal;color:#1b1b1b;transform:scaleX(0.9209);-webkit-text-stroke:.12px">Ctrl+F12</div>
<div class="t" style="left:756.55px;top:567.00px;font-size:16.00px;font-weight:bold;font-style:normal;color:#1b1b1b;transform:scaleX(0.9935);-webkit-text-stroke:.12px">Imprimir</div>
<div class="t" style="left:766.92px;top:585.00px;font-size:16.00px;font-weight:bold;font-style:normal;color:#1b1b1b;transform:scaleX(0.9014);-webkit-text-stroke:.12px">Ctrl+Y</div>
<div class="t" style="left:882.12px;top:567.00px;font-size:16.00px;font-weight:bold;font-style:normal;color:#1b1b1b;transform:scaleX(0.9134);-webkit-text-stroke:.12px">Mais Opções</div>
<div class="t" style="left:901.91px;top:585.00px;font-size:16.00px;font-weight:bold;font-style:normal;color:#1b1b1b;transform:scaleX(0.9199);-webkit-text-stroke:.12px">Ctrl+F7</div>
</body></html>
